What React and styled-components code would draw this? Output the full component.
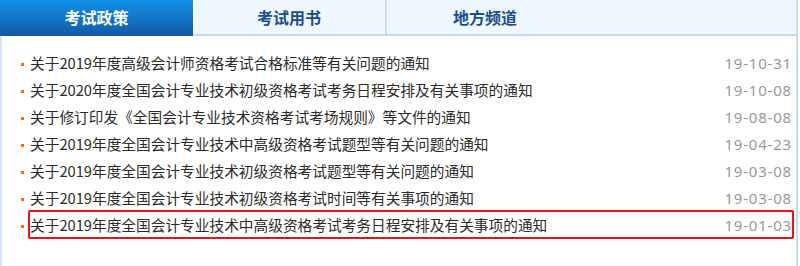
import React from "react";
import styled, { createGlobalStyle } from "styled-components";

const Global = createGlobalStyle`
  html, body { margin: 0; padding: 0; background: #fff; }
  body { font-family: "Noto Sans CJK SC", "Noto Sans", sans-serif; }
`;

const Panel = styled.div`
  width: 798px;
  height: 266px;
  box-sizing: border-box;
  border-right: 2px solid #c9dcf0;
  display: flex;
  flex-direction: column;
`;

const TabBar = styled.div`
  display: flex;
  height: 36px;
  background: #eef6fe;
  border-bottom: 2px solid #c6daef;
  box-sizing: border-box;
`;

const Tab = styled.div`
  width: ${(p) => p.$w}px;
  height: ${(p) => (p.$active ? 36 : 34)}px;
  display: flex;
  align-items: center;
  justify-content: center;
  font-size: 16px;
  font-weight: 700;
  color: ${(p) => (p.$active ? "#fff" : "#1a4d8c")};
  background: ${(p) =>
    p.$active ? "linear-gradient(#1192ea, #1459a6)" : "transparent"};
  border-right: ${(p) => (p.$sep ? "2px solid #cfe0f2" : "none")};
  box-sizing: border-box;
  margin-bottom: ${(p) => (p.$active ? "-2px" : "0")};
  padding-bottom: ${(p) => (p.$active ? "2px" : "0")};
`;

const Body = styled.div`
  flex: 1;
  border-left: 2px solid #d6e5f5;
  padding-top: 13px;
`;

const List = styled.ul`
  list-style: none;
  margin: 0;
  padding: 0;
`;

const Row = styled.li`
  display: flex;
  align-items: center;
  height: 27px;
`;

const Bullet = styled.span`
  width: 3px;
  height: 3px;
  background: #ff6a00;
  margin-left: 19px;
  margin-right: 4px;
  margin-top: 3px;
  flex: none;
`;

const Content = styled.div`
  flex: none;
  width: 766px;
  height: 29px;
  margin: -1px 0;
  box-sizing: border-box;
  display: flex;
  align-items: center;
  justify-content: space-between;
  border: 2px solid ${(p) => (p.$hl ? "#ee1111" : "transparent")};
  border-radius: 2px;
`;

const Title = styled.span`
  font-size: 14.7px;
  color: #2b2b2b;
  white-space: nowrap;
`;

const DateText = styled.span`
  font-size: 15px;
  letter-spacing: 0.8px;
  color: #999;
  font-family: "Noto Sans", "Noto Sans CJK SC", sans-serif;
`;

const items = [
  ["关于2019年度高级会计师资格考试合格标准等有关问题的通知", "19-10-31"],
  ["关于2020年度全国会计专业技术初级资格考试考务日程安排及有关事项的通知", "19-10-08"],
  ["关于修订印发《全国会计专业技术资格考试考场规则》等文件的通知", "19-08-08"],
  ["关于2019年度全国会计专业技术中高级资格考试题型等有关问题的通知", "19-04-23"],
  ["关于2019年度全国会计专业技术初级资格考试题型等有关问题的通知", "19-03-08"],
  ["关于2019年度全国会计专业技术初级资格考试时间等有关事项的通知", "19-03-08"],
  ["关于2019年度全国会计专业技术中高级资格考试考务日程安排及有关事项的通知", "19-01-03"],
];

export default function App() {
  return (
    <>
      <Global />
      <Panel>
        <TabBar>
          <Tab $active $w={193}>考试政策</Tab>
          <Tab $sep $w={194}>考试用书</Tab>
          <Tab $w={196}>地方频道</Tab>
        </TabBar>
        <Body>
          <List>
            {items.map(([t, d], i) => (
              <Row key={i}>
                <Bullet />
                <Content $hl={i === items.length - 1}>
                  <Title>{t}</Title>
                  <DateText>{d}</DateText>
                </Content>
              </Row>
            ))}
          </List>
        </Body>
      </Panel>
    </>
  );
}
